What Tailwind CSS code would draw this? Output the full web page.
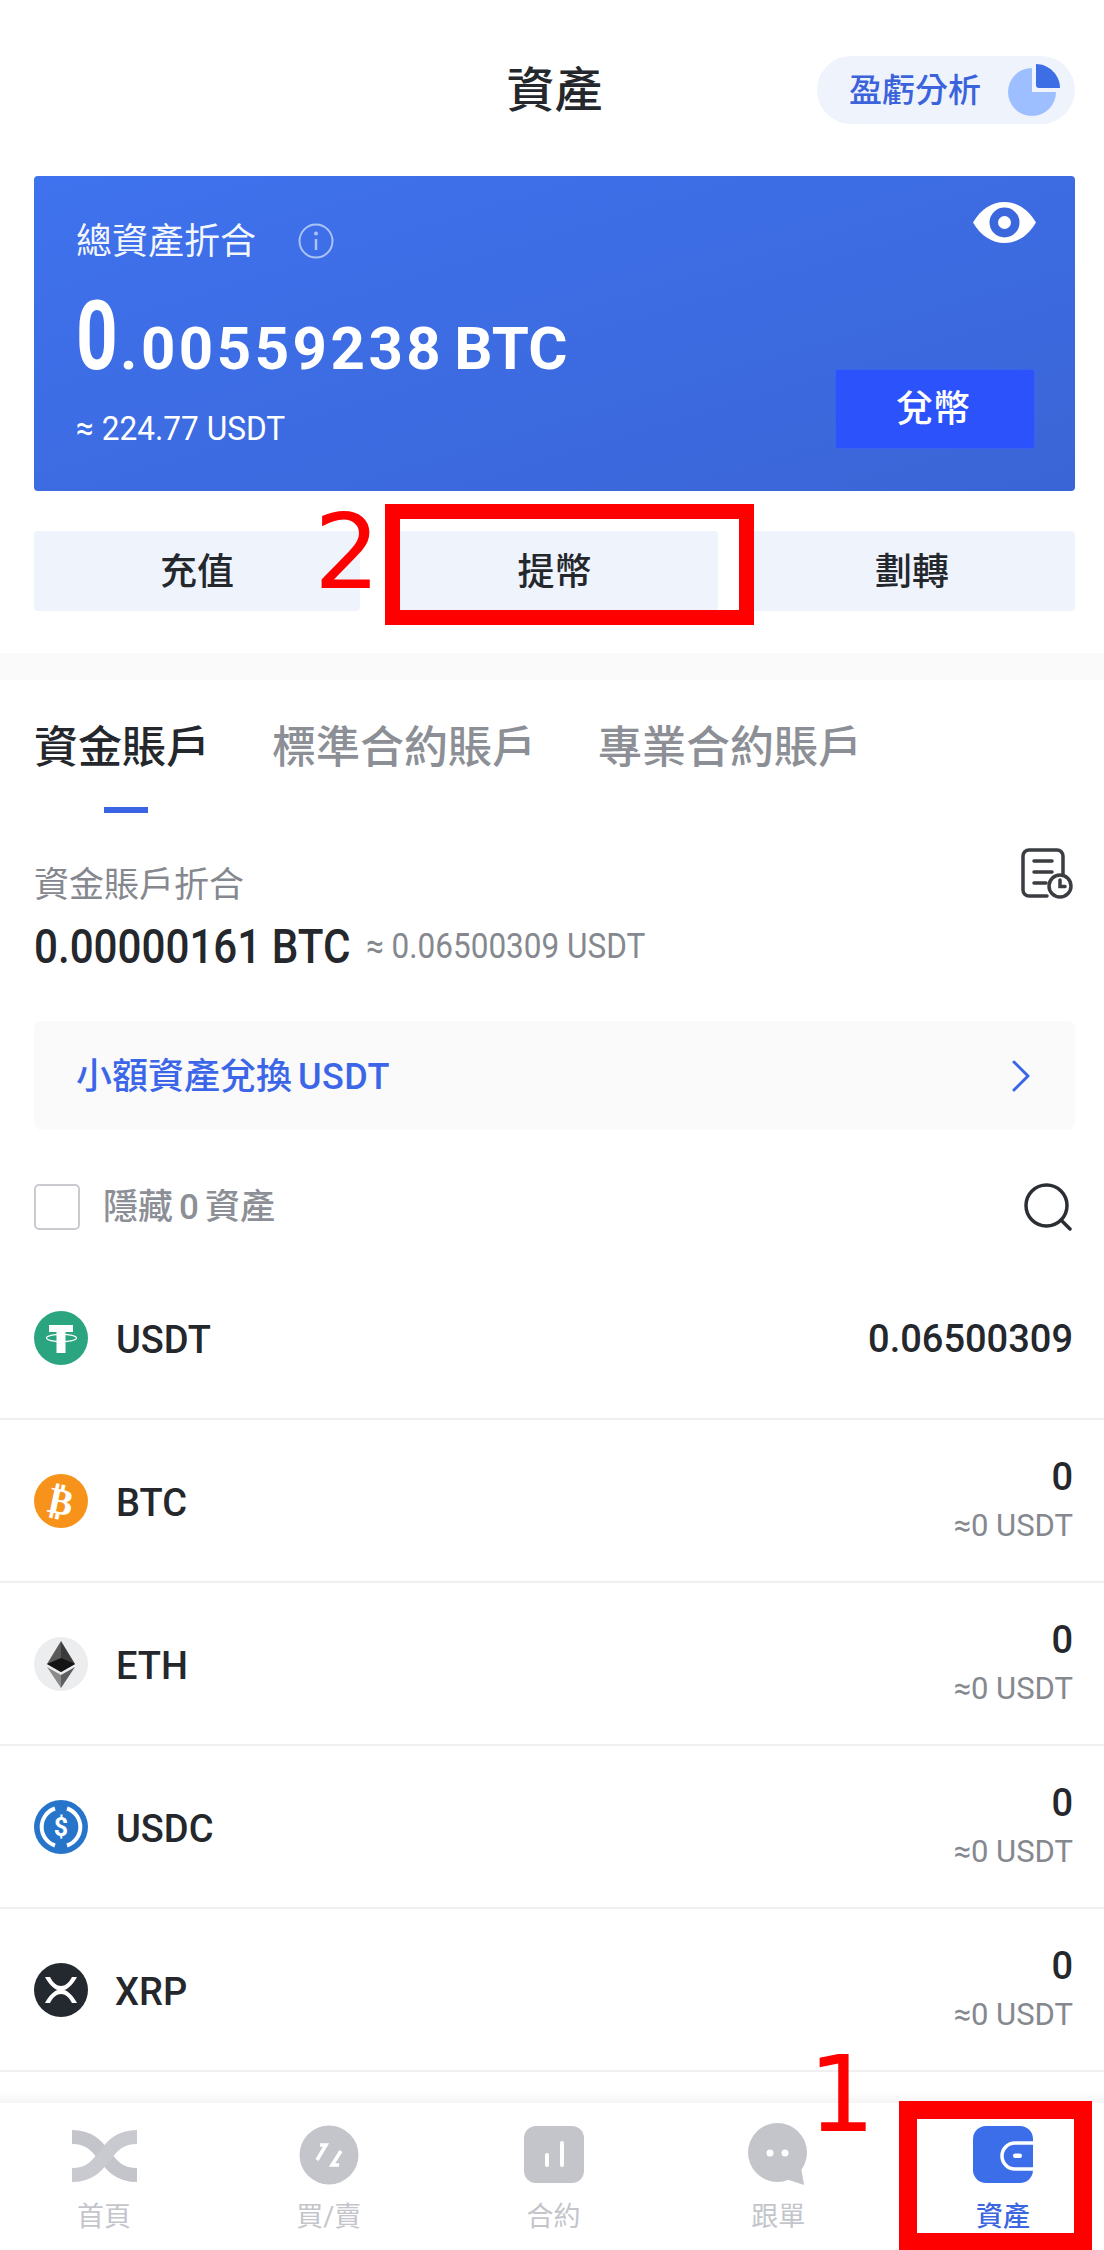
<!DOCTYPE html>
<html lang="zh-Hant">
  <head>
    <meta charset="UTF-8" />
    <meta name="viewport" content="width=device-width, initial-scale=1.0" />
    <title>資產</title>
    <script src="https://cdn.jsdelivr.net/npm/@tailwindcss/browser@4"></script>
  </head>
  <body class="bg-white text-[#24272c] font-['Roboto','Noto_Sans_CJK_TC',sans-serif]">
    <div class="relative w-[1104px] h-[2250px] overflow-hidden bg-white">
      <!-- header -->
      <header class="grid grid-cols-[1fr_auto_1fr] items-center pt-[55px] pl-[34px] pr-[29px] h-[123px]">
        <div></div>
        <h1 class="text-[48px] leading-[68px] pt-[2px] font-medium text-center">資產</h1>
        <div class="flex justify-end">
          <button class="w-[258px] h-[68px] rounded-full bg-[#eff3fc] flex items-center pl-[32px] pr-[15px] justify-between">
            <span class="text-[33px] pt-[2px] font-medium text-[#3b63dc] whitespace-nowrap">盈虧分析</span>
            <svg class="w-[52px] h-[52px]" viewBox="0 0 52 52">
              <path d="M24 4A24 24 0 1 0 48 28H24Z" fill="#9dbfff" />
              <path d="M28 0C41 0 52 11 52 24H31A3 3 0 0 1 28 21Z" fill="#3e6ee6" />
            </svg>
          </button>
        </div>
      </header>

      <main class="pl-[34px] pr-[29px]">
        <!-- total balance card -->
        <section class="mt-[53px] h-[315px] rounded-[4px] bg-linear-to-br from-[#3f72ee] to-[#3a65d6] flex justify-between text-white">
          <div class="pl-[42px] pt-[43px]">
            <div class="flex items-center h-[46px]">
              <span class="text-[36px] leading-[46px] text-white/95">總資產折合</span>
              <svg class="ml-[42px] w-[36px] h-[36px] -mt-[3px]" viewBox="0 0 36 36" fill="none">
                <circle cx="18" cy="18" r="16.5" stroke="#a9c3f7" stroke-width="2" />
                <circle cx="18" cy="10.500" r="2" fill="#a9c3f7" />
                <path d="M18 16v11" stroke="#a9c3f7" stroke-width="2.500" />
              </svg>
            </div>
            <div class="flex items-baseline h-[94px] mt-[24px] font-bold whitespace-nowrap">
              <span class="inline-block w-[44px] origin-left scale-x-75 text-[97px] leading-[94px] font-bold">0</span>
              <span class="text-[60px] leading-[94px] tracking-[3.500px]">.00559238</span>
              <span class="ml-[10px] text-[60px] leading-[94px]">BTC</span>
            </div>
            <div class="w-[225px] origin-left scale-x-93 text-[34px] leading-[40px] mt-[25px] whitespace-nowrap">≈ 224.77 USDT</div>
          </div>
          <div class="flex flex-col justify-between items-end pr-[40px] pt-[26px] pb-[42px]">
            <svg class="w-[63px] h-[41px] -mr-[1px]" viewBox="0 0 63 41">
              <path d="M0 20.500C8 7 19 0 31.500 0S55 7 63 20.500C55 34 44 41 31.500 41S8 34 0 20.500Z" fill="#fff" />
              <circle cx="31.500" cy="20.500" r="15" fill="#3a68dc" />
              <circle cx="31.500" cy="20.500" r="6.500" fill="#fff" />
            </svg>
            <button class="w-[200px] h-[80px] rounded-[3px] bg-[#2b52fb] border border-[#3a62f0] pt-[2px] pr-[4px] text-[37px] font-medium text-white">兌幣</button>
          </div>
        </section>

        <!-- actions -->
        <div class="mt-[40px] flex justify-between">
          <button class="w-[326px] h-[80px] rounded-[4px] bg-[#eff3fc] pt-[4px] text-[37px] font-medium">充值</button>
          <button class="w-[326px] h-[80px] rounded-[4px] bg-[#eff3fc] pt-[4px] text-[37px] font-medium">提幣</button>
          <button class="w-[326px] h-[80px] rounded-[4px] bg-[#eff3fc] pt-[4px] text-[37px] font-medium">劃轉</button>
        </div>
      </main>

      <div class="mt-[42px] h-[27px] bg-[#fafafa]"></div>

      <section class="pl-[34px] pr-[29px]">
        <!-- tabs -->
        <nav class="flex gap-[62px] pt-[37px] h-[133px] whitespace-nowrap text-[44px] leading-[62px] font-medium text-[#8c8f95]">
          <div class="relative text-[#24272c]">
            資金賬戶
            <span class="absolute left-[70px] top-[90px] w-[44px] h-[6px] bg-[#3b64e4]"></span>
          </div>
          <div>標準合約賬戶</div>
          <div>專業合約賬戶</div>
        </nav>

        <!-- funding account summary -->
        <div class="flex justify-between items-start h-[208px]">
          <div>
            <div class="mt-[51px] text-[35px] leading-[44px] text-[#85888e]">資金賬戶折合</div>
            <div class="mt-[11px] flex items-center whitespace-nowrap">
              <span class="w-[316px] origin-left scale-x-86 text-[49px] leading-[56px] font-medium">0.00000161 BTC</span>
              <span class="ml-[16px] w-[280px] origin-left scale-x-90 text-[35px] text-[#85888e]">≈ 0.06500309 USDT</span>
            </div>
          </div>
          <svg class="mt-[35px] mr-[2px] w-[52px] h-[52px]" viewBox="0 0 52 52" fill="none" stroke="#3a3d42" stroke-width="3.500" stroke-linecap="round">
            <path d="M42 26V8a6 6 0 0 0-6-6H8a6 6 0 0 0-6 6v34a6 6 0 0 0 6 6h18" />
            <path d="M13 13h18M13 24h18M13 35h12" />
            <circle cx="39" cy="38" r="11" />
            <path d="M39 32v6.500h5" />
          </svg>
        </div>

        <!-- small balance convert -->
        <div class="h-[109px] rounded-[8px] bg-[#fafafa] flex items-center justify-between pl-[42px] pr-[45px]">
          <span class="pt-[2px] text-[36px] font-medium text-[#3c66e8] whitespace-nowrap">小額資產兌換<span class="ml-[6px] tracking-[0.5px]">USDT</span></span>
          <svg class="w-[18px] h-[32px]" viewBox="0 0 18 32" fill="none" stroke="#3c66e8" stroke-width="3" stroke-linecap="round" stroke-linejoin="round">
            <path d="M2 2l14 14L2 30" />
          </svg>
        </div>

        <!-- filter -->
        <div class="mt-[54px] flex items-center justify-between h-[46px]">
          <label class="flex items-center">
            <span class="w-[46px] h-[46px] rounded-[5px] border-2 border-[#c9cbd1]"></span>
            <span class="ml-[23px] pt-[2px] text-[35px] font-medium text-[#8c8f95] whitespace-nowrap">隱藏<span class="mx-[6px]">0</span>資產</span>
          </label>
          <svg class="mr-[3px] w-[48px] h-[48px]" viewBox="0 0 48 48" fill="none" stroke="#2b2e33" stroke-width="3.500" stroke-linecap="round">
            <circle cx="22.500" cy="22.500" r="20.500" />
            <path d="M37 37l9 9" />
          </svg>
        </div>
      </section>

      <!-- coin list -->
      <ul class="mt-[27px]">
        <li class="h-[163px] border-b-2 border-[#f0f0f0] flex items-center justify-between pl-[34px] pr-[31px]">
          <div class="flex items-center">
            <svg class="w-[54px] h-[54px]" viewBox="0 0 54 54">
              <circle cx="27" cy="27" r="27" fill="#2aa57f" />
              <ellipse cx="27.500" cy="27" rx="15" ry="3.600" fill="none" stroke="#fff" stroke-width="1.200" />
              <path d="M15 14h24v7h-7.500v21h-9V21H15Z" fill="#fff" />
            </svg>
            <span class="ml-[28px] pt-[4px] text-[38px] leading-[48px] font-medium">USDT</span>
          </div>
          <div class="pt-[3px] text-[38px] leading-[48px] font-medium">0.06500309</div>
        </li>
        <li class="h-[163px] border-b-2 border-[#f0f0f0] flex items-center justify-between pl-[34px] pr-[31px]">
          <div class="flex items-center">
            <svg class="w-[54px] h-[54px]" viewBox="0 0 54 54">
              <circle cx="27" cy="27" r="27" fill="#f7931a" />
              <text x="27" y="40" text-anchor="middle" font-family="DejaVu Sans" font-weight="700" font-size="37" fill="#fff" transform="rotate(12 27 27)">₿</text>
            </svg>
            <span class="ml-[28px] pt-[4px] text-[38px] leading-[48px] font-medium">BTC</span>
          </div>
          <div class="text-right">
            <div class="text-[38px] leading-[44px] font-medium">0</div>
            <div class="text-[31px] leading-[40px] mt-[7px] text-[#85888e]">≈0 USDT</div>
          </div>
        </li>
        <li class="h-[163px] border-b-2 border-[#f0f0f0] flex items-center justify-between pl-[34px] pr-[31px]">
          <div class="flex items-center">
            <svg class="w-[54px] h-[54px]" viewBox="0 0 54 54">
              <circle cx="27" cy="27" r="27" fill="#ecedee" />
              <path d="M27 4 13 27l14 8Z" fill="#5a5a5a" />
              <path d="M27 4l14 23-14 8Z" fill="#3a3a3a" />
              <path d="M13 27l14-6 14 6-14 8Z" fill="#141414" />
              <path d="M13 30l14 8v13Z" fill="#8a8a8a" />
              <path d="M41 30l-14 8v13Z" fill="#5f5f5f" />
            </svg>
            <span class="ml-[28px] pt-[4px] text-[38px] leading-[48px] font-medium">ETH</span>
          </div>
          <div class="text-right">
            <div class="text-[38px] leading-[44px] font-medium">0</div>
            <div class="text-[31px] leading-[40px] mt-[7px] text-[#85888e]">≈0 USDT</div>
          </div>
        </li>
        <li class="h-[163px] border-b-2 border-[#f0f0f0] flex items-center justify-between pl-[34px] pr-[31px]">
          <div class="flex items-center">
            <svg class="w-[54px] h-[54px]" viewBox="0 0 54 54">
              <circle cx="27" cy="27" r="27" fill="#2775ca" />
              <path d="M21 8.500a19.500 19.500 0 0 0 0 37M33 8.500a19.500 19.500 0 0 1 0 37" fill="none" stroke="#fff" stroke-width="4" />
              <text x="27" y="36" text-anchor="middle" font-family="Roboto" font-weight="700" font-size="25" fill="#fff">$</text>
            </svg>
            <span class="ml-[28px] pt-[4px] text-[38px] leading-[48px] font-medium">USDC</span>
          </div>
          <div class="text-right">
            <div class="text-[38px] leading-[44px] font-medium">0</div>
            <div class="text-[31px] leading-[40px] mt-[7px] text-[#85888e]">≈0 USDT</div>
          </div>
        </li>
        <li class="h-[163px] border-b-2 border-[#f0f0f0] flex items-center justify-between pl-[34px] pr-[31px]">
          <div class="flex items-center">
            <svg class="w-[54px] h-[54px]" viewBox="0 0 54 54">
              <circle cx="27" cy="27" r="27" fill="#23292f" />
              <path d="M11 14h5c3 6 7 9 11 9s8-3 11-9h5c-4 8-10 12.500-13 13 3 .5 9 5 13 13h-5c-3-6-7-9-11-9s-8 3-11 9h-5c4-8 10-12.500 13-13-3-.5-9-5-13-13Z" fill="#fff" />
            </svg>
            <span class="ml-[27px] pt-[4px] text-[38px] leading-[48px] font-medium">XRP</span>
          </div>
          <div class="text-right">
            <div class="text-[38px] leading-[44px] font-medium">0</div>
            <div class="text-[31px] leading-[40px] mt-[7px] text-[#85888e]">≈0 USDT</div>
          </div>
        </li>
      </ul>

      <!-- bottom nav -->
      <div class="absolute left-0 right-0 bottom-0 h-[147px] bg-white">
        <div class="absolute left-0 right-0 -top-[12px] h-[12px] bg-linear-to-b from-white to-[#f5f5f5]"></div>
        <nav class="flex justify-between pl-[34px] pr-[31px] pt-[20px] text-[27px] leading-[38px] text-[#c3c5ca]">
          <div class="w-[140px] flex flex-col items-center">
            <svg class="w-[65px] h-[62px]" viewBox="0 0 65 62" fill="none">
              <path d="M0 14C19 14 26 25 32.500 33S46 52 65 52" stroke="#c3c5ca" stroke-width="14" />
              <path d="M65 14C46 14 39 25 32.500 33S19 52 0 52" stroke="#c8cacf" stroke-width="14" />
            </svg>
            <span class="mt-[13px]">首頁</span>
          </div>
          <div class="w-[140px] flex flex-col items-center">
            <svg class="w-[60px] h-[62px]" viewBox="0 0 60 62" fill="none">
              <circle cx="30" cy="32" r="29.500" fill="#c3c5ca" />
              <path d="M18 37l9-15h-6M42 28l-9 14h7" stroke="#fff" stroke-width="3.500" />
            </svg>
            <span class="mt-[13px]">買/賣</span>
          </div>
          <div class="w-[60px] mx-[40px] flex flex-col items-center">
            <svg class="w-[60px] h-[62px]" viewBox="0 0 60 62">
              <rect x="0" y="3" width="60" height="57" rx="12" fill="#c3c5ca" />
              <path d="M23 32v10M38 20v22" stroke="#fff" stroke-width="4" stroke-linecap="round" />
            </svg>
            <span class="mt-[13px] whitespace-nowrap">合約</span>
          </div>
          <div class="w-[140px] flex flex-col items-center">
            <svg class="w-[60px] h-[62px]" viewBox="0 0 60 62">
              <circle cx="29.500" cy="29.500" r="29.500" fill="#c3c5ca" />
              <path d="M38 56l18 6-3-18Z" fill="#c3c5ca" />
              <circle cx="22" cy="30" r="3.500" fill="#fff" />
              <circle cx="37" cy="30" r="3.500" fill="#fff" />
            </svg>
            <span class="mt-[13px]">跟單</span>
          </div>
          <div class="w-[140px] flex flex-col items-center font-medium text-[#3c66e0]">
            <svg class="w-[60px] h-[62px]" viewBox="0 0 60 62">
              <rect x="0" y="3" width="60" height="57" rx="13" fill="#3d6ee9" />
              <path d="M60 20H42a13 13 0 0 0 0 26H60" fill="none" stroke="#fff" stroke-width="3.500" />
              <rect x="40" y="30.500" width="9" height="4.500" rx="2.250" fill="#fff" />
            </svg>
            <span class="mt-[13px]">資產</span>
          </div>
        </nav>
      </div>

      <!-- red annotations -->
      <div class="absolute left-[385px] top-[504px] w-[369px] h-[121px] border-[15px] border-[#ff0000]"></div>
      <div class="absolute left-[899px] top-[2101px] w-[193px] h-[149px] border-x-[18px] border-t-[18px] border-b-[17px] border-[#ff0000]"></div>
      <span class="absolute left-[314px] top-[490px] text-[104px] leading-[124px] text-[#ff0000] font-['DejaVu_Sans',sans-serif]">2</span>
      <span class="absolute left-[808px] top-[2033px] text-[106px] leading-[124px] text-[#ff0000] font-['DejaVu_Sans',sans-serif]">1</span>
    </div>
  </body>
</html>
